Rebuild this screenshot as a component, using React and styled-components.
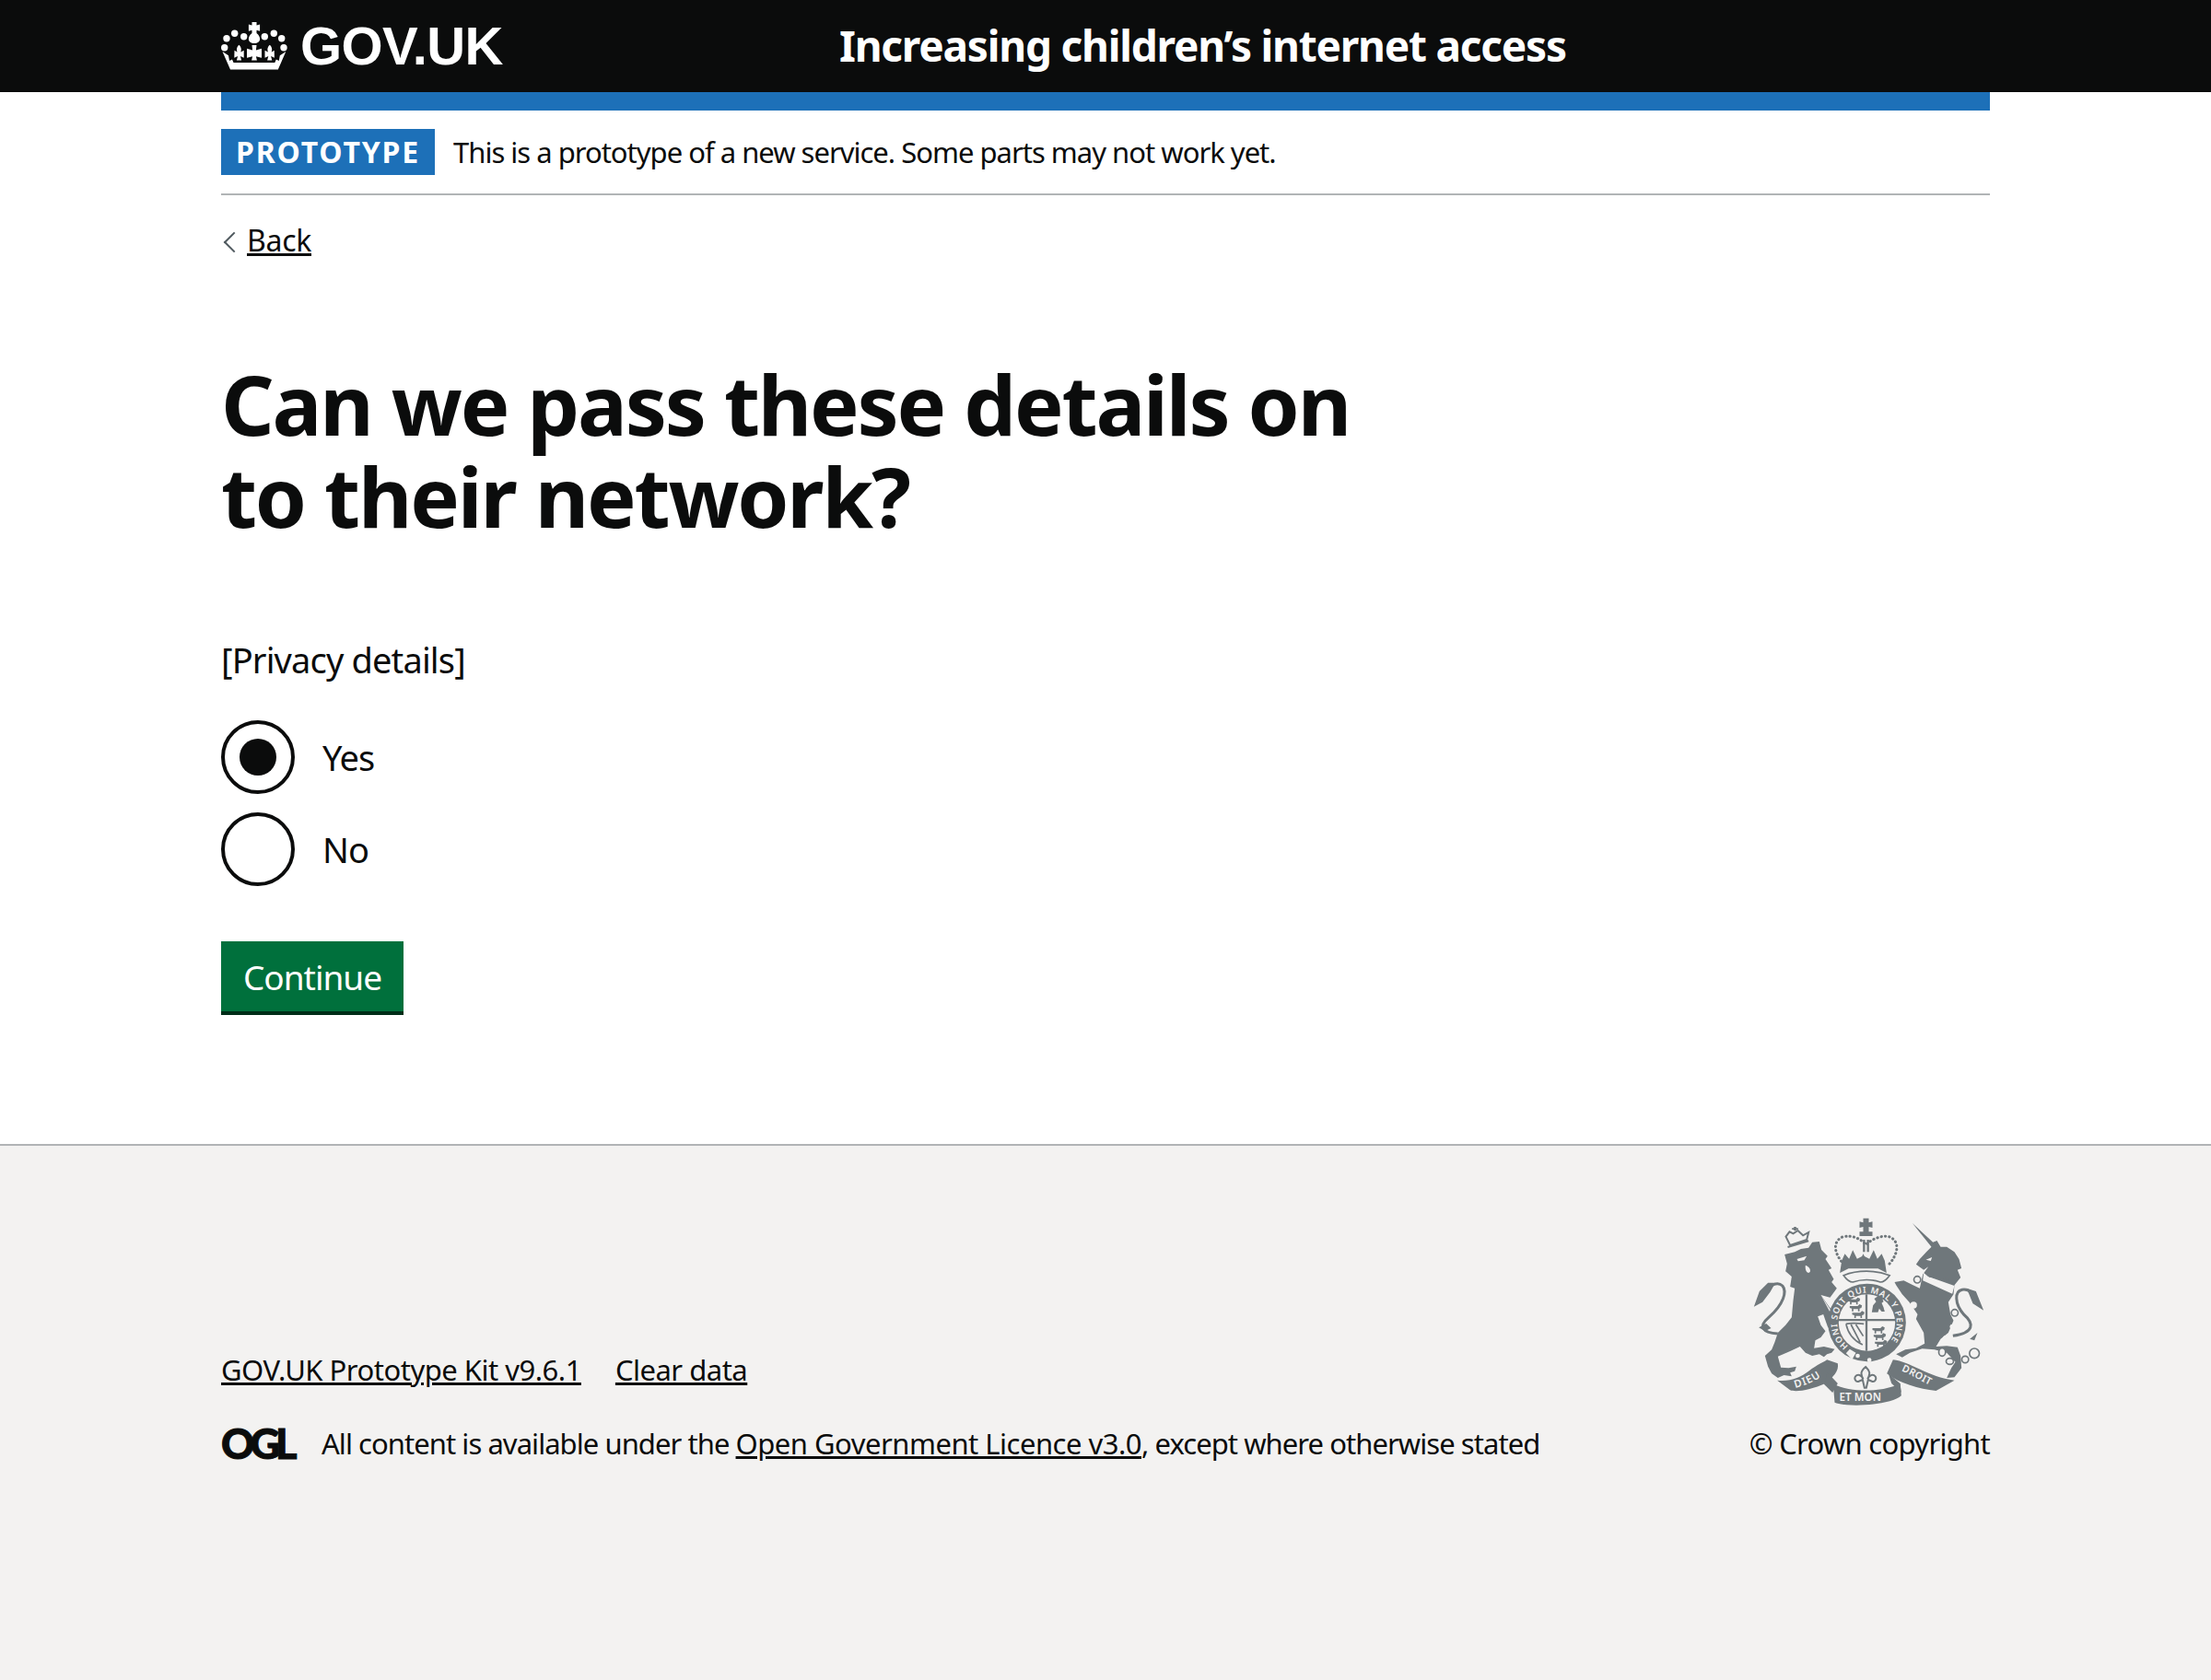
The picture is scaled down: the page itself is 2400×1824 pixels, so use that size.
import React from 'react';
import styled, { createGlobalStyle } from 'styled-components';

const INK = '#0b0c0c';
const CREST = '#6f777b';
const FOOTER_BG = '#f3f2f1';

const LIONS = [
  [378, 330], [384, 352], [392, 374],
  [458, 424], [462, 446], [466, 468],
];

const GlobalStyle = createGlobalStyle`
  html, body {
    margin: 0;
    padding: 0;
    background: #fff;
  }
  body {
    font-family: "Noto Sans", "Liberation Sans", sans-serif;
    color: ${INK};
  }
`;

function CrownIcon() {
  const dots = [
    [6, 17.7], [14.7, 12.3], [24.7, 15.7], [47.3, 15.7], [57.3, 12.3], [65.7, 17.7], [3.7, 27.7], [68, 27.7],
  ];
  return (
    <svg width="72" height="52" viewBox="0 0 72 52" fill="#fff" aria-hidden="true">
      {dots.map(([cx, cy]) => (
        <circle key={cx + '-' + cy} cx={cx} cy={cy} r="3.7" />
      ))}
      <path d="M33.5 0h5v3.6l3.600-1v7.200l-3.600-1v3.200c2.600 2 3.600 4.400 3.600 6.400 0 2.600-2.400 4.600-6.100 4.600s-6.100-2-6.100-4.600c0-2 1-4.400 3.600-6.400V8.800l-3.600 1V2.600l3.600 1z" />
      <path d="M33.500 25h5l-.6 5.400 6.100-1.600v10l-6.100-1.600 1 4.300h-5.800l1-4.300-6.100 1.600v-10l6.100 1.600z" />
      <path d="M19.300 24.500c2.400 2.400 3.200 5 2 8l3.400-1.800v8l-3.800-1.600 1.200 4.400h-5.200l1.200-4.400-3.800 1.600 .2-8 3 1.800c-1.200-3-.4-5.600 2-8z" />
      <path d="M52.700 24.500c2.400 2.400 3.200 5 2 8l3-1.800 .2 8-3.800-1.600 1.200 4.400h-5.200l1.200-4.400-3.800 1.600v-8l3.400 1.800c-1.200-3-.4-5.600 2-8z" />
      <path d="M1.500 32l6.500 4.200 1 5.800 3-1.500 1.500 3.500h44.800l1.500-3.500 3 1.500 1-5.800 6.500-4.200-8.500 19.500H10z" />
    </svg>
  );
}

function RoyalArms() {
  return (
    <CrestSvg width="252" height="205" viewBox="70 70 755 615" aria-hidden="true">
      {/* lion */}
      <path
        fill={CREST}
        d="M172 190L205 182 225 172 250 168 262 150 285 148 292 175 312 195 305 205 325 235 315 240 332 270 325 280 342 300 320 330 290 322 318 362 345 400 340 425 322 440 312 425 298 385 280 392 290 420 305 440 290 460 272 470 268 495 300 490 335 498 325 510 310 515 300 524 285 515 262 520 240 510 222 490 190 505 150 522 160 558 185 560 210 555 205 570 190 575 195 587 170 583 150 592 130 578 118 555 108 520 130 500 140 475 150 445 175 420 195 395 200 340 205 300 190 295 195 262 175 245 180 220z"
      />
      <path fill="none" stroke={CREST} strokeWidth="9" d="M150 448C100 445 85 425 120 395 170 352 180 310 165 292 150 278 122 288 112 312" />
      <path fill={CREST} d="M72 360L90 310 118 282 142 282 125 312 100 345zM88 428L112 415 128 430 108 440z" />
      <path fill={FOOTER_BG} d="M212 205l32-10-8 14-20 3zM240 225c14 4 20 20 12 24-8 2-14-10-12-24zM290 322l40 62-6 2z" />
      <path fill="none" stroke={CREST} strokeWidth="6" d="M182 166L250 146M176 132L190 160 244 142 250 118 232 128 215 112 200 122 188 116z" />
      <path fill={CREST} d="M202 100h8v12h-8zM196 104h20v5h-20z" />
      {/* unicorn */}
      <path
        fill={CREST}
        d="M588 88L655 150 668 145 680 165 700 165 725 182 740 205 748 235 735 240 745 265 725 290 722 320 705 345 712 385 722 405 705 445 680 465 665 490 700 488 735 492 745 520 748 560 725 590 700 592 715 560 728 540 700 510 660 500 620 497 580 510 555 525 535 515 565 500 600 495 628 480 625 445 600 400 605 385 578 345 555 320 535 290 530 280 560 275 590 290 612 300 622 255 640 230 625 240 600 222 612 205 635 180 650 165z"
      />
      <path fill="none" stroke={CREST} strokeWidth="9" d="M720 455C790 445 790 415 755 385 725 350 725 310 750 305 775 300 790 325 795 340" />
      <path fill={CREST} d="M820 372L795 310 765 300 785 350zM775 465L800 445 790 470z" />
      <path fill={FOOTER_BG} d="M625 250L640 262 725 292 718 318 622 275zM632 207l20-8-4 12z" />
      <path fill={CREST} d="M636 268v-8h6v4h7v-9h6v12h7v-8h6v11h7v-8h6v11h7v-8h6v11h7v-6h6v10l-71-24z" />
      <g fill={FOOTER_BG} stroke={CREST} strokeWidth="5">
        <ellipse cx="685" cy="508" rx="11" ry="13" />
        <ellipse cx="710" cy="538" rx="12" ry="10" />
        <circle cx="760" cy="532" r="11" />
        <circle cx="790" cy="512" r="16" />
        <circle cx="726" cy="380" r="11" />
        <circle cx="604" cy="272" r="11" />
      </g>
      <g fill={FOOTER_BG}>
        <circle cx="718" cy="425" r="8" />
        <circle cx="696" cy="462" r="8" />
        <circle cx="592" cy="355" r="11" />
      </g>
      {/* crown */}
      <path
        fill="none"
        stroke={CREST}
        strokeWidth="9"
        strokeDasharray="1 12"
        strokeLinecap="round"
        d="M365 222C335 190 325 150 360 133 395 125 420 140 437 158 455 140 490 125 515 133 550 150 540 190 512 222"
      />
      <path fill={CREST} d="M428 72h18v14l12-3v20l-12-3v16h12v14h-42v-14h12v-16l-12 3V83l12 3z" />
      <path fill={CREST} d="M427 142h7v40h-7zM440 142h7v40h-7z" />
      <path fill={CREST} d="M358 210l10-22 14 16 12-28 14 28 16-8 4-8 4 8 16 8 14-28 12 28 14-16 10 22 6 40-28-14H380l-28 14z" />
      <path fill={FOOTER_BG} stroke={CREST} strokeWidth="5" d="M364 258c45-18 105-18 150 0-10 14-22 22-30 22-30-10-60-10-90 0-8 0-20-8-30-22z" />
      {/* garter and shield */}
      <circle cx="440" cy="412" r="127" fill={CREST} />
      <circle cx="440" cy="412" r="92" fill={FOOTER_BG} />
      <path id="garter-ring" d="M380 488A97 97 0 1 1 500 488" fill="none" />
      <text fontFamily="Noto Sans, sans-serif" fontSize="28" fontWeight="600" letterSpacing="2.5" fill={FOOTER_BG}>
        <textPath href="#garter-ring">HONI SOIT QUI MAL Y PENSE</textPath>
      </text>
      <path fill={CREST} d="M435 320h7v184h-7zM348 400h184v7H348z" />
      <g fill={CREST}>
        {LIONS.map(([x, y]) => (
          <path key={x + '-' + y} d="M0 6h26l6-6 8 4-2 8-6 2v9h-5v-7H12v7H7v-9L0 12z" transform={`translate(${x} ${y})`} />
        ))}
        <path d="M456 378l4-22 10-12-6-10 12-8 14 6 4 12-6 4 6 14 4 14h-10l-8-10-4 12z" />
      </g>
      <g fill="none" stroke={CREST} strokeWidth="5">
        <path d="M372 416c6 30 24 54 54 68M372 416c18-4 42-2 58 0M388 418l30 58M404 418l24 38" />
      </g>
      <g fill={FOOTER_BG}>
        <path d="M372 512l12-14 20 12-12 22z" />
        <circle cx="410" cy="520" r="7" />
        <circle cx="448" cy="534" r="7" />
      </g>
      {/* fleur and motto ribbons */}
      <path
        fill={FOOTER_BG}
        stroke={CREST}
        strokeWidth="6"
        d="M436 556c14 14 16 22 6 40 6-14 18-18 26-8 4 8-2 18-10 16l-14-6-6 26h-6l-6-26-14 6c-8 2-14-8-10-16 8-10 20-6 26 8-10-18-8-26 8-40z"
      />
      <g fill={CREST}>
        <path d="M148 600C190 605 225 590 250 570 280 548 300 540 310 533L345 545C350 570 330 590 305 610 260 630 210 640 190 632z" />
        <path d="M525 533C580 538 640 590 725 600L665 634C610 628 545 610 505 578z" />
        <path d="M330 612C390 640 490 640 548 610L552 650C520 680 380 690 335 672z" />
        <path d="M312 575L345 610 328 640 300 612z" />
        <path d="M510 578L548 610 552 640 520 610z" />
      </g>
      <path id="motto-left" d="M207 625C245 615 295 595 325 555" fill="none" />
      <path id="motto-right" d="M552 568C590 585 630 610 672 628" fill="none" />
      <g fontFamily="Noto Sans, sans-serif" fontWeight="600" fill={FOOTER_BG}>
        <text fontSize="34" letterSpacing="3">
          <textPath href="#motto-left">DIEU</textPath>
        </text>
        <text fontSize="35" x="350" y="668">ET MON</text>
        <text fontSize="32" letterSpacing="1">
          <textPath href="#motto-right">DROIT</textPath>
        </text>
      </g>
    </CrestSvg>
  );
}

export default function App() {
  return (
    <>
      <GlobalStyle />
      <Page>
        <Header>
          <HeaderInner>
            <Logo>
              <CrownIcon />
              <LogoText>GOV.UK</LogoText>
            </Logo>
            <ServiceName>Increasing children’s internet access</ServiceName>
          </HeaderInner>
        </Header>
        <Container>
          <BlueBar />
          <PhaseBanner>
            <PhaseTag>PROTOTYPE</PhaseTag>
            <PhaseText>This is a prototype of a new service. Some parts may not work yet.</PhaseText>
          </PhaseBanner>
          <BackLink href="#">Back</BackLink>
          <Main>
            <Heading>
              Can we pass these details on
              <br />
              to their network?
            </Heading>
            <Body>[Privacy details]</Body>
            <Radios>
              <RadioRow>
                <RadioCircle $checked />
                <RadioLabel>Yes</RadioLabel>
              </RadioRow>
              <RadioRow>
                <RadioCircle />
                <RadioLabel>No</RadioLabel>
              </RadioRow>
            </Radios>
            <Button>Continue</Button>
          </Main>
        </Container>
        <Footer>
          <FooterInner>
            <FooterMeta>
              <MetaLinks>
                <FooterLink href="#">GOV.UK Prototype Kit v9.6.1</FooterLink>
                <FooterLink href="#">Clear data</FooterLink>
              </MetaLinks>
              <Licence>
                <OglMark>OGL</OglMark>
                <LicenceText>
                  All content is available under the <FooterLink href="#">Open Government Licence v3.0</FooterLink>,
                  except where otherwise stated
                </LicenceText>
              </Licence>
            </FooterMeta>
            <Copyright>
              <RoyalArms />
              <CopyrightText>© Crown copyright</CopyrightText>
            </Copyright>
          </FooterInner>
        </Footer>
      </Page>
    </>
  );
}

const Page = styled.div`
  min-height: 1824px;
  display: flex;
  flex-direction: column;
`;

const Header = styled.header`
  height: 100px;
  background: ${INK};
  color: #fff;
`;

const HeaderInner = styled.div`
  width: 1920px;
  height: 100%;
  margin: 0 auto;
  display: flex;
  align-items: center;
`;

const Logo = styled.div`
  width: 671px;
  display: flex;
  align-items: center;
  gap: 14px;
`;

const LogoText = styled.span`
  font-family: "Liberation Sans", Arial, sans-serif;
  font-weight: 700;
  font-size: 58px;
  letter-spacing: -0.6px;
  line-height: 100px;
`;

const ServiceName = styled.span`
  margin-top: -3px;
  font-size: 46px;
  font-weight: 700;
  letter-spacing: -1.22px;
`;

const Container = styled.div`
  width: 1920px;
  margin: 0 auto;
  flex: 1;
`;

const BlueBar = styled.div`
  height: 20px;
  background: #1d70b8;
`;

const PhaseBanner = styled.div`
  display: flex;
  align-items: center;
  gap: 20px;
  padding: 20px 0;
  border-bottom: 2px solid #b1b4b6;
`;

const PhaseTag = styled.strong`
  height: 50px;
  line-height: 50px;
  width: 232px;
  box-sizing: border-box;
  text-align: center;
  background: #1d70b8;
  color: #fff;
  font-size: 32px;
  font-weight: 700;
  letter-spacing: 1.8px;
`;

const PhaseText = styled.span`
  font-size: 31px;
  letter-spacing: -1px;
`;

const BackLink = styled.a`
  display: inline-block;
  position: relative;
  margin-top: 26px;
  padding-left: 28px;
  font-size: 32px;
  line-height: 46px;
  letter-spacing: -0.3px;
  color: ${INK};
  text-decoration: underline;
  &::before {
    content: '';
    position: absolute;
    left: 6px;
    top: 17px;
    width: 14px;
    height: 14px;
    border-left: 2px solid #505a5f;
    border-bottom: 2px solid #505a5f;
    transform: rotate(45deg);
  }
`;

const Main = styled.main`
  padding-top: 104px;
`;

const Heading = styled.h1`
  margin: 0 0 103px;
  font-size: 90px;
  line-height: 100px;
  font-weight: 700;
  letter-spacing: -2.2px;
`;

const Body = styled.p`
  margin: 0 0 41px;
  font-size: 38px;
  line-height: 50px;
  letter-spacing: -0.85px;
`;

const Radios = styled.div`
  display: flex;
  flex-direction: column;
  gap: 20px;
`;

const RadioRow = styled.label`
  display: flex;
  align-items: center;
  gap: 30px;
`;

const RadioCircle = styled.span`
  box-sizing: border-box;
  width: 80px;
  height: 80px;
  border: 4px solid ${INK};
  border-radius: 50%;
  display: flex;
  align-items: center;
  justify-content: center;
  &::after {
    content: '';
    width: 40px;
    height: 40px;
    border-radius: 50%;
    background: ${({ $checked }) => ($checked ? INK : 'transparent')};
  }
`;

const RadioLabel = styled.span`
  font-size: 38px;
  letter-spacing: -1px;
`;

const Button = styled.button`
  display: block;
  margin-top: 60px;
  height: 76px;
  width: 198px;
  padding: 0;
  background: #00703c;
  color: #fff;
  border: 0;
  box-shadow: 0 4px 0 #002d18;
  font-family: inherit;
  font-size: 37px;
  letter-spacing: -1px;
`;

const Footer = styled.footer`
  height: 582px;
  box-sizing: border-box;
  border-top: 2px solid #b1b4b6;
  background: ${FOOTER_BG};
`;

const FooterInner = styled.div`
  width: 1920px;
  margin: 0 auto;
  padding-top: 78px;
  display: flex;
  justify-content: space-between;
  align-items: flex-end;
  font-size: 31px;
  line-height: 40px;
`;

const FooterMeta = styled.div`
  display: flex;
  flex-direction: column;
  gap: 40px;
`;

const MetaLinks = styled.div`
  display: flex;
  gap: 37px;
`;

const FooterLink = styled.a`
  color: ${INK};
  letter-spacing: -0.5px;
  text-decoration: underline;
`;

const Licence = styled.div`
  display: flex;
  align-items: center;
  gap: 27px;
`;

const LicenceText = styled.span`
  letter-spacing: -0.95px;
`;

const OglMark = styled.span`
  font-family: Lato, sans-serif;
  font-weight: 900;
  font-size: 45px;
  line-height: 40px;
  letter-spacing: -5px;
  -webkit-text-stroke: 1px ${INK};
  width: 82px;
`;

const Copyright = styled.div`
  display: flex;
  flex-direction: column;
  align-items: flex-end;
  gap: 20px;
`;

const CrestSvg = styled.svg`
  margin-right: 5px;
`;

const CopyrightText = styled.span`
  letter-spacing: -0.72px;
`;
